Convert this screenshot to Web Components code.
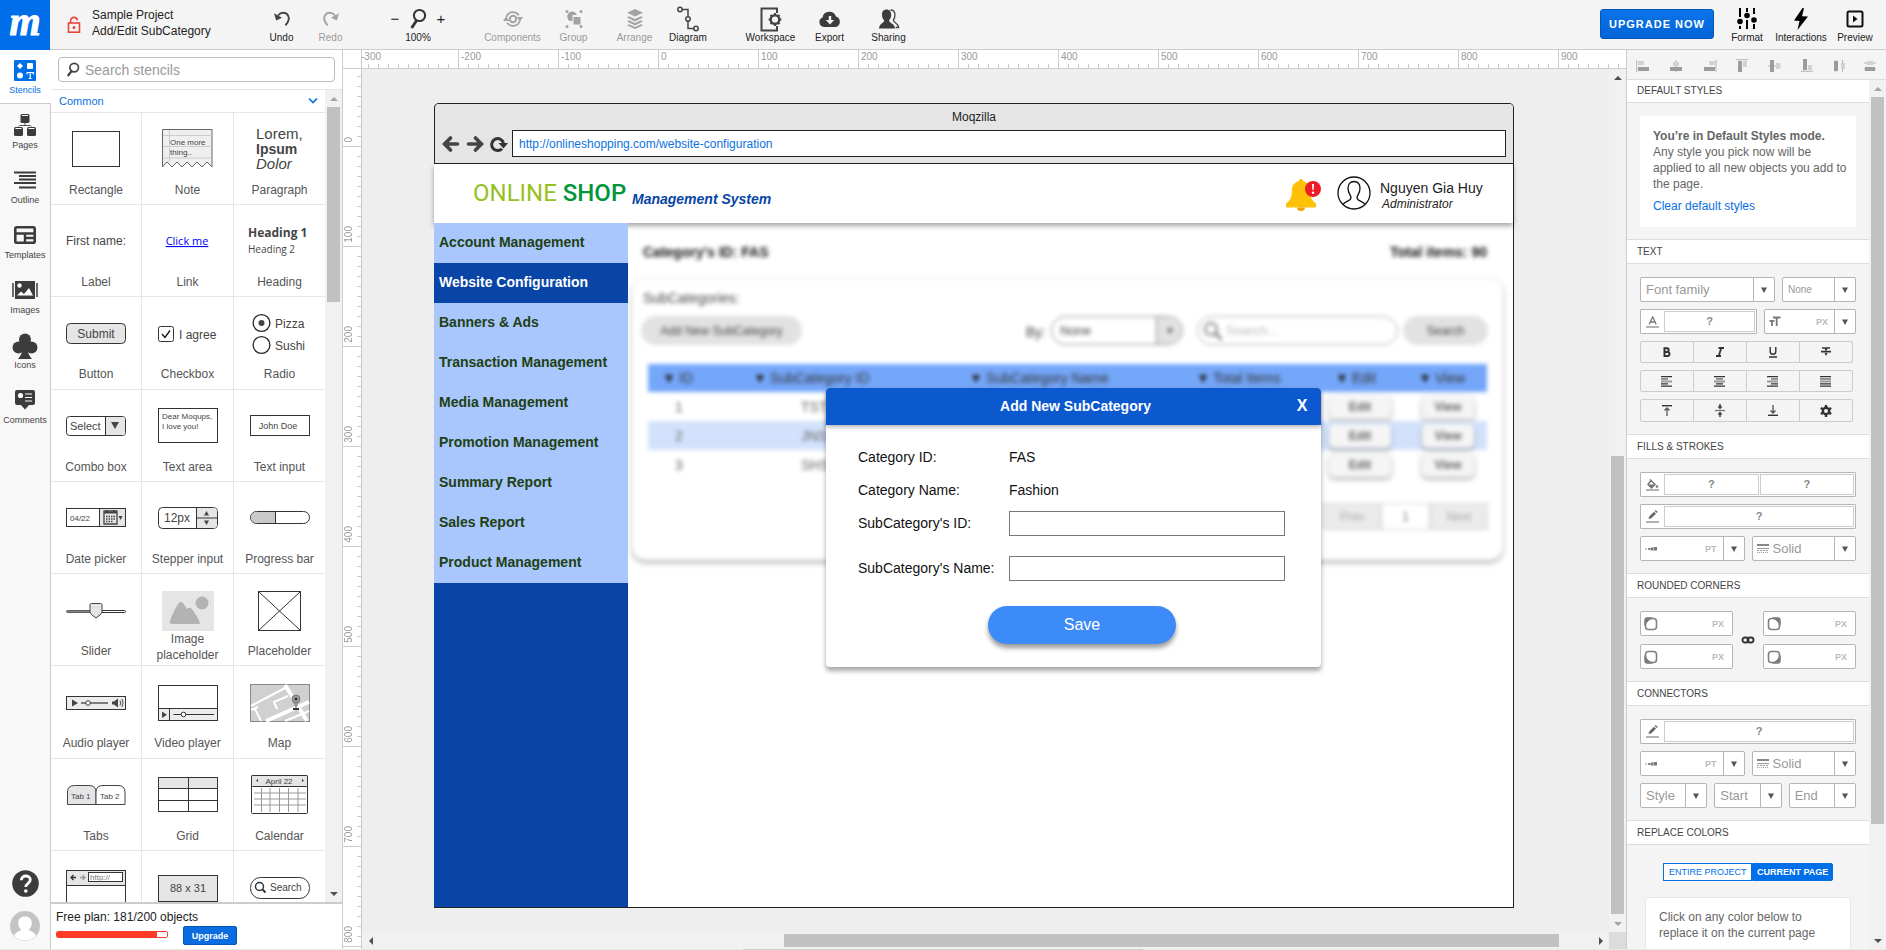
<!DOCTYPE html>
<html lang="en">
<head>
<meta charset="utf-8">
<title>Sample Project - Add/Edit SubCategory</title>
<style>
html,body{margin:0;height:100%}
body{font:12px/16px "Liberation Sans",Arial,sans-serif;color:#444;background:#eee;overflow:hidden}
</style>
</head>
<body>
<mockup-editor></mockup-editor>
<script>
const BASE = `*{box-sizing:border-box}
button,input,select{font:inherit;color:inherit;margin:0;padding:0;border:0;background:none;border-radius:0;outline:0;min-width:0}
button{cursor:pointer}svg{display:block;flex:none}a{text-decoration:none}`;

function define(name, css, html) {
  customElements.define(name, class extends HTMLElement {
    connectedCallback() {
      if (this.shadowRoot) return;
      const t = document.createElement('template');
      t.innerHTML = `<style>${BASE}${css}</style>` + (typeof html === 'function' ? html(this) : html);
      this.attachShadow({mode: 'open'}).append(t.content.cloneNode(true));
    }
  });
}

/* name: [width, height, markup] */
const ICONS = {
  lock: [14,18,'<g fill="none" stroke="#e8453c" stroke-width="1.6"><rect x="1.5" y="7" width="11" height="9.200"/><path d="M3.600 7V5.200C3.600 2.800 5 1.400 7 1.400c2 0 3.200 1.200 3.400 3"/></g><circle cx="7" cy="11.600" r="1.500" fill="#e8453c"/>'],
  undo: [20,18,'<path d="M6 5.500C9 1.800 14 2 16 5.400c1.600 3 .6 6.600-2.600 10" fill="none" stroke="currentColor" stroke-width="1.900"/><path d="M2 3.200l2.200 7.400 5.800-2.800z" fill="currentColor"/>'],
  redo: [20,18,'<path d="M14 5.500C11 1.800 6 2 4 5.400c-1.600 3-.6 6.600 2.600 10" fill="none" stroke="currentColor" stroke-width="1.900"/><path d="M18 3.200l-2.200 7.400-5.800-2.800z" fill="currentColor"/>'],
  mag: [18,22,'<circle cx="10.500" cy="7.500" r="5.600" fill="none" stroke="currentColor" stroke-width="2"/><path d="M7.600 12.400L2.600 20" stroke="currentColor" stroke-width="2.800"/>'],
  smallmag: [14,16,'<circle cx="8.200" cy="5.600" r="4.300" fill="none" stroke="currentColor" stroke-width="1.700"/><path d="M5.600 9L1.800 14" stroke="currentColor" stroke-width="2.200"/>'],
  components: [22,20,'<g fill="none" stroke="currentColor" stroke-width="1.800"><path d="M4.300 8a7 7 0 0 1 12.500-1.800M17.700 12a7 7 0 0 1-12.500 1.800"/><circle cx="11" cy="10" r="3.200" stroke-width="2"/></g><path d="M14.500 8h6.500l-3 4.500zM7.500 12H1l3-4.500z" fill="currentColor"/>'],
  group: [20,20,'<g fill="currentColor"><circle cx="3" cy="2.500" r="1.500"/><circle cx="17" cy="2.500" r="1.500"/><circle cx="3" cy="17.500" r="1.500"/><circle cx="17" cy="17.500" r="1.500"/><path d="M6 12a5 5 0 1 1 7-6H8.500v6z"/><rect x="9.500" y="8" width="7" height="7.500"/></g>'],
  arrange: [18,20,'<g fill="currentColor"><path d="M9 0l8 3.800-8 3.800-8-3.800z"/><path d="M3 7.200L9 10l6-2.800 2 1.300L9 12.400 1 8.500z"/><path d="M3 11.200L9 14l6-2.800 2 1.300-8 3.900-8-3.900z"/><path d="M3 15.200L9 18l6-2.800 2 1.300L9 20l-8-3.500z"/></g>'],
  diagram: [24,26,'<g fill="none" stroke="#444" stroke-width="1.500"><circle cx="4" cy="3.500" r="2.200"/><circle cx="12" cy="13" r="2.200"/><circle cx="20" cy="22.500" r="2.200"/><path d="M6.200 3.500H12v7.300M12 15.200v7.300h5.800"/></g>'],
  workspace: [22,25,'<path d="M17 6V1.500H1.500v22H17V19" fill="none" stroke="#444" stroke-width="2"/><circle cx="15" cy="12.500" r="4.300" fill="none" stroke="#444" stroke-width="2.400"/><path d="M15 6v2.500M15 16.500V19M8.600 12.500H11M19 12.500h2.400M10.500 8l1.700 1.700M17.800 15.300l1.700 1.700M10.500 17l1.700-1.700M17.800 9.700L19.500 8" stroke="#444" stroke-width="2"/>'],
  export: [24,18,'<path d="M6 17a5 5 0 0 1-1.500-9.600A7 7 0 0 1 18 6.500 5.500 5.500 0 0 1 18 17z" fill="#3c3c3c"/><path d="M10.800 6h2.400v4h3L12 14.500 7.800 10h3z" fill="#f4f4f4"/>'],
  sharing: [22,20,'<path d="M12.500 1c3 0 4.500 2 4.500 5 0 2.500-.7 3.800-1.600 5 0 3 4.600 2.600 5.200 7.500h-3" fill="none" stroke="#444" stroke-width="1.300"/><path d="M8.500.5c3.200 0 4.700 2.200 4.700 5.200 0 2.600-.9 4.300-2.200 5.500 0 3 5.500 2.600 6 8.300H1c.5-5.700 5.200-5.300 5.200-8.300C4.800 10 4 8.300 4 5.700 4 2.700 5.400.5 8.500.5z" fill="#3c3c3c"/>'],
  format: [20,22,'<g stroke="#000" stroke-width="2"><path d="M3 0v9M3 18v3M10 0v4M10 12v9M17 0v6M17 16v5"/></g><g fill="#000"><circle cx="3" cy="13.500" r="2.800"/><circle cx="10" cy="7.500" r="2.800"/><circle cx="17" cy="12" r="2.800"/></g>'],
  bolt: [16,22,'<path d="M9.500 0L1 12.500l5.500.5L4.500 22 15 8.500 9 8.200 11 .2z" fill="#000"/>'],
  preview: [18,18,'<rect x="1.500" y="1.500" width="15" height="15" rx="1.500" fill="none" stroke="#111" stroke-width="2"/><path d="M7 5.500v7l4.500-3.500z" fill="#111"/>'],
  stencils: [22,21,'<rect width="22" height="21" rx="1" fill="#006fe8"/><g fill="#fff"><path d="M6 3l3 3-3 3-3-3z"/><rect x="13" y="3" width="6" height="6" rx="1"/><circle cx="6" cy="15.500" r="3"/><path d="M13 12.500h6.400v2M13 14.500v-2M16.200 12.500v6M14.800 18.500h2.800" fill="none" stroke="#fff" stroke-width="1.200"/></g>'],
  pages: [24,24,'<g fill="#3c3c3c"><rect x="7.500" y="1" width="9" height="9" rx="1.500"/><rect x="1" y="14" width="9" height="9" rx="1.500"/><rect x="14" y="14" width="9" height="9" rx="1.500"/></g><path d="M9 2.500h6M2.500 15.500h6M15.500 15.500h6" stroke="#fff"/><path d="M12 10v2.500M5.500 13.500l1-1h11l1 1" fill="none" stroke="#555"/>'],
  outline: [22,18,'<path d="M0 1.500h22M5 5h17M5 8.500h17M0 12h22M5 16.500h17" stroke="#3c3c3c" stroke-width="2"/>'],
  templates: [22,18,'<rect x="1.300" y="1.300" width="19.400" height="15.400" rx="1.500" fill="none" stroke="#3c3c3c" stroke-width="2.600"/><path d="M1 7.500h20M11 7.500V17M11 12h10" stroke="#3c3c3c" stroke-width="2.400"/>'],
  images: [26,18,'<path d="M1 2v14M25 2v14" stroke="#3c3c3c" stroke-width="1.500"/><rect x="3" y="0" width="20" height="18" fill="#3c3c3c"/><path d="M5 14.500l4-4 3 2.500 5-6 4 7.500z" fill="#fff"/><circle cx="7.500" cy="4.500" r="2.200" fill="#fff"/>'],
  club: [26,26,'<g fill="#3c3c3c"><circle cx="13" cy="6.500" r="6"/><circle cx="6.500" cy="14.500" r="6"/><circle cx="19.500" cy="14.500" r="6"/><path d="M11 10h4c0 8 1 11 5 16H6c4-5 5-8 5-16z"/></g>'],
  comments: [22,20,'<path d="M3 0h16a2 2 0 0 1 2 2v11a2 2 0 0 1-2 2h-4l-4 4.500L7 15H3a2 2 0 0 1-2-2V2a2 2 0 0 1 2-2z" fill="#3c3c3c"/><circle cx="6.500" cy="5.500" r="2.600" fill="#fff"/><path d="M11 4h7M11 7.500h7M11 11h7" stroke="#fff" stroke-width="1.200"/>'],
  help: [27,27,'<circle cx="13.500" cy="13.500" r="13.300" fill="#3c3c3c"/><path d="M9.300 10.300c0-5.800 9-5.500 9-.6 0 3.600-4.500 3.600-4.500 7.300" fill="none" stroke="#fff" stroke-width="2.800"/><circle cx="13.800" cy="21" r="1.800" fill="#fff"/>'],
  user: [30,30,'<circle cx="15" cy="15" r="15" fill="#c4c4c4"/><path d="M15 5.500c4.300 0 6.800 2.600 6.800 6.800 0 2.500-1.200 4.500-2.800 6 0 2 6 2.500 7 6.500A15 15 0 0 1 4 24.800c1-4 7-4.500 7-6.500-1.600-1.500-2.800-3.500-2.800-6 0-4.200 2.500-6.800 6.800-6.800z" fill="#fff"/>'],
  chevron: [10,8,'<path d="M1 1.500l4 4 4-4" fill="none" stroke="#0a70e0" stroke-width="1.700"/>'],
  caret: [8,8,'<path d="M1 1.500h6L4 7z" fill="#555"/>'],
  alL: [14,12,'<path d="M.7 0v12" stroke="#b5b5b5"/><rect x="2" y="1" width="6" height="4" fill="#d2d2d2"/><rect x="2" y="7" width="11" height="4" fill="#9c9c9c"/>'],
  alC: [14,12,'<path d="M7 0v12" stroke="#b5b5b5"/><rect x="4" y="2" width="6" height="4" fill="#d2d2d2"/><rect x="1" y="7" width="12" height="4" fill="#9c9c9c"/>'],
  alR: [14,12,'<path d="M13 0v12" stroke="#b5b5b5"/><rect x="6" y="1" width="6" height="4" fill="#d2d2d2"/><rect x="1" y="7" width="11" height="4" fill="#9c9c9c"/>'],
  alT: [12,13,'<path d="M0 .7h12" stroke="#b5b5b5"/><rect x="2" y="2" width="4" height="11" fill="#9c9c9c"/><rect x="7" y="2" width="4" height="6" fill="#d2d2d2"/>'],
  alM: [14,12,'<path d="M0 6h13" stroke="#b5b5b5"/><rect x="2" y="0" width="4" height="12" fill="#9c9c9c"/><rect x="8" y="3" width="4" height="6" fill="#d2d2d2"/>'],
  alB: [12,13,'<path d="M0 12.300h12" stroke="#b5b5b5"/><rect x="2" y="0" width="4" height="11" fill="#9c9c9c"/><rect x="7" y="6" width="4" height="5" fill="#d2d2d2"/>'],
  diH: [12,12,'<path d="M2.500 0v12M9.500 0v12" stroke="#b5b5b5"/><rect x="1" y="1" width="4" height="10" fill="#9c9c9c"/><rect x="8" y="3" width="4" height="6" fill="#d2d2d2"/>'],
  diV: [12,12,'<path d="M0 3h12M0 9h12" stroke="#b5b5b5"/><rect x="3" y="1" width="6" height="4" fill="#d2d2d2"/><rect x="1" y="7" width="10" height="4" fill="#9c9c9c"/>'],
  A: [14,12,'<path d="M3.200 8.500L6.700.8 10.200 8.500M4.500 6h4.500" fill="none" stroke="#777" stroke-width="1.300"/><path d="M0 11h13" stroke="#b9b0b0" stroke-width="2"/>'],
  tT: [12,11,'<path d="M4 1.500h7.500M7.700 1.500V10M.5 4.800h5M3 4.800V10" stroke="#777" stroke-width="1.800" fill="none"/>'],
  bucket: [14,12,'<path d="M5 1.500l4 4-3.500 3.500L2 5.500zM4 .5l2 2" fill="none" stroke="#777" stroke-width="1.500"/><path d="M2 5.500h7L5.500 9z" fill="#777"/><circle cx="11" cy="7.500" r="1.300" fill="#777"/><path d="M0 11h13" stroke="#b9b0b0" stroke-width="2"/>'],
  pencil: [14,13,'<path d="M2.500 9l.7-2.500L8 1.700l2 2L5 8.500zM8.700 1l1-1 2 2-1 1z" fill="#666"/><path d="M0 12h13" stroke="#b9b0b0" stroke-width="2"/>'],
  dots: [12,4,'<rect x="0" y="1.500" width="2" height="1" fill="#999"/><rect x="3" y="1" width="2" height="2" fill="#888"/><rect x="5.500" y=".5" width="2.500" height="3" fill="#777"/><rect x="8.500" y="0" width="3.500" height="3.500" fill="#777"/>'],
  lines: [12,9,'<path d="M0 1h12" stroke="#888" stroke-width="2"/><path d="M0 4.500h12" stroke="#999"/><path d="M0 6.500h12" stroke="#999" stroke-dasharray="2 1"/><path d="M0 8.500h12" stroke="#999" stroke-dasharray="1 1"/>'],
  B: [10,10,'<path d="M2.500 1.200h3a2 2 0 0 1 0 3.700h-3zM2.500 5h3.500a2 2 0 0 1 0 3.900H2.500z" fill="none" stroke="#333" stroke-width="2"/>'],
  I: [10,10,'<path d="M3.500 1H9M1 9h5M6.300 1L3.700 9" stroke="#333" stroke-width="1.800"/>'],
  U: [10,11,'<path d="M2.200 0v4.500a2.800 2.800 0 0 0 5.600 0V0M1 10h8" fill="none" stroke="#333" stroke-width="1.400"/>'],
  S: [12,10,'<path d="M2 1h8M1 4.600h10" stroke="#333" stroke-width="1.600"/><path d="M5 1h2v2.500H5zM4.500 6h3L6 9z" fill="#333"/>'],
  tl: [12,11,'<path d="M0 .7h11M0 3h7M0 7.800h7M0 10.200h11" stroke="#333" stroke-width="1.200"/><path d="M0 5.500h11" stroke="#999" stroke-width="2"/>'],
  tc: [12,11,'<path d="M0 .7h11M2 3h7M2 7.800h7M0 10.200h11" stroke="#333" stroke-width="1.200"/><path d="M0 5.500h11" stroke="#999" stroke-width="2"/>'],
  tr: [12,11,'<path d="M0 .7h11M4 3h7M4 7.800h7M0 10.200h11" stroke="#333" stroke-width="1.200"/><path d="M0 5.500h11" stroke="#999" stroke-width="2"/>'],
  tj: [12,11,'<path d="M0 .7h11M0 3h11M0 7.800h11M0 10.200h11" stroke="#333" stroke-width="1.200"/><path d="M0 5.500h11" stroke="#999" stroke-width="2"/>'],
  vt: [10,11,'<path d="M0 .7h10" stroke="#333" stroke-width="1.400"/><path d="M5 3v8M2.500 5.500L5 3l2.500 2.500" fill="none" stroke="#555" stroke-width="1.300"/>'],
  vm: [10,13,'<path d="M0 6.500h10" stroke="#777" stroke-width="1.400"/><path d="M5 0v3M5 13v-3" stroke="#333" stroke-width="1.500"/><path d="M2.500 2.500h5L5 5.200zM2.500 10.500h5L5 7.800z" fill="#333"/>'],
  vb: [10,11,'<path d="M0 10.300h10" stroke="#333" stroke-width="1.400"/><path d="M5 0v8M2.500 5.500L5 8l2.500-2.500" fill="none" stroke="#555" stroke-width="1.300"/>'],
  gear: [12,12,'<circle cx="6" cy="6" r="3.200" fill="none" stroke="#333" stroke-width="2.400"/><path d="M6 0v3M6 9v3M.8 3l2.600 1.500M8.600 7.500L11.200 9M.8 9l2.600-1.500M8.600 4.500L11.200 3" stroke="#333" stroke-width="2.400"/>'],
  c1: [14,14,'<path d="M.3 9V3.300a3 3 0 0 1 3-3H9L5 3 3 5z" fill="#777"/><rect x="1.500" y="1.500" width="11" height="11" rx="3" fill="none" stroke="#808080" stroke-width="1.600"/><path d="M2 8V4a2 2 0 0 1 2-2h4C5 2.500 2.500 5 2 8z" fill="#777"/>'],
  link: [14,8,'<g fill="none" stroke="#333" stroke-width="1.900"><rect x="1.500" y="1.500" width="6" height="5" rx="2.500"/><rect x="6.500" y="1.500" width="6" height="5" rx="2.500"/></g>'],
  back: [18,18,'<path d="M15.500 9H4M8.500 3L2.500 9l6 6" fill="none" stroke="#444" stroke-width="3.600" stroke-linecap="round"/>'],
  fwd: [18,18,'<path d="M2.500 9H14M9.500 3l6 6-6 6" fill="none" stroke="#444" stroke-width="3.600" stroke-linecap="round"/>'],
  reload: [18,18,'<path d="M12 13.800A6 6 0 1 1 13.500 8" fill="none" stroke="#333" stroke-width="3"/><path d="M8.500 8h9.500L13.500 13.500z" fill="#333"/>'],
  bell: [32,32,'<path d="M15 0c1.500 0 2.200 1 2.200 2.200 5.300 1.300 7 5 7 9.800 0 7 2 9.500 5.800 12.500v4H0v-4C3.800 21.500 5.800 19 5.800 12c0-4.800 1.700-8.500 7-9.800C12.800 1 13.500 0 15 0z" fill="#ffc107"/><path d="M11 28.500h8a4 3.500 0 0 1-8 0z" fill="#f0a400"/>'],
  alert: [16,16,'<circle cx="8" cy="8" r="8" fill="#ee1c25"/><path d="M7 3h2l-.4 6H7.400z" fill="#fff"/><circle cx="8" cy="11.800" r="1.200" fill="#fff"/>'],
  admin: [34,34,'<g fill="none" stroke="#111" stroke-width="1.300"><circle cx="17" cy="17" r="16"/><path d="M6 28.500c1.500-3.500 8-3 8-7 0-2.500-3-4-3-9C11 8 13 5.500 17 5.500s6 2.500 6 7c0 5-3 6.500-3 9 0 4 6.500 3.500 8 7"/></g>'],
  pmag: [20,20,'<circle cx="8" cy="8" r="6" fill="none" stroke="#555" stroke-width="1.500"/><path d="M12.500 12.500l6 6" stroke="#555" stroke-width="2"/>']
};
const icon = (n, tf = '') => { const [w,h,m] = ICONS[n];
  return `<svg width="${w}" height="${h}" viewBox="0 0 ${w} ${h}" aria-hidden="true"${tf ? ` style="transform:${tf}"` : ''}>${m}</svg>`; };

/* ---------- scroll bar ---------- */
define('scroll-bar', `:host{display:flex;flex-direction:column;width:17px;background:#f1f1f1;flex:none}
:host([horizontal]){flex-direction:row;width:auto;height:17px}
.end{flex:none;width:17px;height:17px;display:grid;place-items:center}
.a{flex-grow:var(--before,0)}.t{flex-grow:var(--thumb,1);background:#c1c1c1;margin:0 2px}.b{flex-grow:var(--after,0)}
:host([horizontal]) .t{margin:2px 0}`,
 el => { const h = el.hasAttribute('horizontal'), c = i => (el.getAttribute('ends') || 'dd')[i] === 'd' ? '#505050' : '#a3a3a3';
  const tri = (p, f) => `<div class="end"><svg width="8" height="8" viewBox="0 0 8 8"><path d="${p}" fill="${f}"/></svg></div>`;
  return tri(h ? 'M6 0v8L2 4z' : 'M0 6h8L4 2z', c(0)) + '<div class="a"></div><div class="t"></div><div class="b"></div>' + tri(h ? 'M2 0v8l4-4z' : 'M0 2h8L4 6z', c(1)); });

/* ---------- top bar ---------- */
define('tool-button', `:host{display:block;width:var(--w,61px);color:#222}
:host([muted]){color:#9a9a9a}
button{width:100%;display:flex;flex-direction:column;align-items:center;font-size:10px;line-height:12px;padding-top:6px}
.i{height:26px;display:grid;place-items:center;color:#444}:host([muted]) .i{color:#a3a3a3}`,
 el => `<button${el.hasAttribute('muted') ? ' disabled' : ''} style="color:inherit"><span class="i">${icon(el.getAttribute('icon'))}</span><slot></slot></button>`);

define('top-bar', `:host{display:flex;height:50px;background:#f4f4f4;border-bottom:1px solid #ccc;color:#222}
.logo{width:50px;height:50px;background:#006de9;color:#fff;flex:none;text-align:center;font:italic bold 40px/44px "Liberation Serif",serif;-webkit-text-stroke:1px #fff}
.lock{width:42px;display:grid;place-items:center;flex:none;padding-right:10px;padding-left:16px}
.title{width:165px;padding-top:7px;flex:none;white-space:nowrap}
.title div{height:16px}
.grp{display:flex;flex:none}
.zoom{width:60px;margin:0 34px 0 33px;display:grid;grid-template-columns:14px 1fr 14px;justify-items:center;align-items:center;grid-template-rows:26px 12px;padding-top:6px;align-content:start;font-size:10px;line-height:12px}
.zoom button{font-size:15px}.zoom .i{color:#333}.zoom span{grid-column:1/4}
.up{margin-left:auto;align-self:start;margin-top:9px;height:30px;width:114px;border:1px solid #0057b8;border-radius:3px;background:linear-gradient(#0a74e8,#0264d8);color:#fff;font-weight:bold;font-size:11px;letter-spacing:1px;flex:none}`,
`<div class="logo">m</div><div class="lock">${icon('lock')}</div>
<div class="title"><div>Sample Project</div><div>Add/Edit SubCategory</div></div>
<div class="grp" style="--w:49px"><tool-button icon="undo">Undo</tool-button><tool-button icon="redo" muted>Redo</tool-button></div>
<div class="zoom"><button aria-label="Zoom out">−</button><div class="i">${icon('mag')}</div><button aria-label="Zoom in">+</button><span>100%</span></div>
<div class="grp"><tool-button icon="components" muted>Components</tool-button><tool-button icon="group" muted>Group</tool-button><tool-button icon="arrange" muted>Arrange</tool-button><tool-button icon="diagram" style="--w:46px">Diagram</tool-button></div>
<div class="grp" style="--w:59px;margin-left:30px"><tool-button icon="workspace">Workspace</tool-button><tool-button icon="export">Export</tool-button><tool-button icon="sharing">Sharing</tool-button></div>
<button class="up">UPGRADE NOW</button>
<div class="grp" style="--w:54px;margin:0 4px 0 6px"><tool-button icon="format">Format</tool-button><tool-button icon="bolt">Interactions</tool-button><tool-button icon="preview">Preview</tool-button></div>`);

/* ---------- left rail ---------- */
define('rail-item', `:host{display:block;height:55px}
button{width:100%;height:100%;display:flex;flex-direction:column;align-items:center;padding-top:9px;font-size:9px;line-height:12px;gap:2px}
.i{height:24px;display:grid;place-items:center}
:host([active]){background:#fff;height:54px;border-bottom:1px solid #ccc;margin-right:-1px;color:#006fe8}
:host([active]) button{padding-top:8px;padding-right:1px}`,
 el => `<button><span class="i">${icon(el.getAttribute('icon'))}</span><slot></slot></button>`);
define('side-rail', `:host{display:flex;flex-direction:column;width:51px;background:#f8f8f8;border-right:1px solid #ccc;flex:none}
.foot{margin-top:auto;display:flex;flex-direction:column;align-items:center;gap:14px;padding-bottom:8px}`,
`<rail-item icon="stencils" active>Stencils</rail-item><rail-item icon="pages">Pages</rail-item><rail-item icon="outline">Outline</rail-item><rail-item icon="templates">Templates</rail-item><rail-item icon="images">Images</rail-item><rail-item icon="club">Icons</rail-item><rail-item icon="comments">Comments</rail-item>
<div class="foot"><button aria-label="Help">${icon('help')}</button><button aria-label="Account">${icon('user')}</button></div>`);

/* ---------- stencil panel ---------- */
const box = (x,y,w,h,f='#fff',r=0) => `<rect x="${x}" y="${y}" width="${w}" height="${h}" rx="${r}" fill="${f}" stroke="#333"/>`;
const txt = (x,y,s,t,extra='') => `<text x="${x}" y="${y}" font-size="${s}" ${extra}>${t}</text>`;
const mid = 'text-anchor="middle"';
const STENCILS = [
 ['Rectangle', box(-23.5,18.5,47,35)],
 ['Note', `<path d="M-25.500 54V16.500H24V54l-5-5-5 5-5-5-5 5-5-5-5 5-5-5-5 5-5-5z" fill="#efefef" stroke="#666"/><path d="M-25 22.500H24M-25 33.500H24M-25 45H24M-18.500 17V49" stroke="#ccc"/>` + txt(-18,32,8,'One more') + txt(-18,42,8,'thing..')],
 ['Paragraph', txt(-24,26,15,'Lorem,') + txt(-24,41,14,'Ipsum','font-weight="bold"') + txt(-24,56,15,'Dolor','font-style="italic"')],
 ['Label', txt(0,40,12,'First name:',mid)],
 ['Link', txt(-1,40,11,'Click me','text-anchor="middle" font-family="Open Sans" style="fill:#00f;text-decoration:underline"')],
 ['Heading', txt(-32,32,12,'Heading 1','font-weight="bold" font-family="Open Sans"') + txt(-32,48,10,'Heading 2','font-family="Open Sans"')],
 ['Button', box(-29.5,26.5,59,20,'#e5e5e5',4) + txt(0,41,12,'Submit',mid)],
 ['Checkbox', box(-29.5,29.5,15,15,'#fff',2) + '<path d="M-26 37l3 3.500 5-7" fill="none" stroke="#111" stroke-width="1.300"/>' + txt(-9,42,12,'I agree')],
 ['Radio', '<g fill="none" stroke="#222" stroke-width="1.300"><circle cx="-18.500" cy="26" r="8.400"/><circle cx="-18.500" cy="48" r="8.400"/></g><circle cx="-18.500" cy="26" r="3" fill="#444"/>' + txt(-5,31,12,'Pizza') + txt(-5,53,12,'Sushi')],
 ['Combo box', box(-29.5,26.5,59,19,'#fff',3) + '<path d="M9.500 27H27a2 2 0 0 1 2 2v14a2 2 0 0 1-2 2H9.500z" fill="#e5e5e5"/><path d="M9.500 27v18" stroke="#333"/><path d="M15 32h8l-4 7z" fill="#444"/>' + txt(-26,40,11,'Select')],
 ['Text area', box(-29.5,18.5,59,34) + txt(-26,29,8,'Dear Moqups,') + txt(-26,39,8,'I love you!')],
 ['Text input', box(-29.5,25.5,59,20) + txt(-2,39,9,'John Doe',mid)],
 ['Date picker', box(-29.5,26.5,59,18) + '<rect x="4" y="27" width="25" height="17" fill="#e5e5e5"/><path d="M3.500 27v17" stroke="#333"/><path d="M8 29h13v13H8z" fill="none" stroke="#444" stroke-width="1.300"/><path d="M8 30.500h13M11 28v3M18 28v3" stroke="#444" stroke-width="2"/><path d="M10 34.500h9M10 37h9M10 39.500h7" stroke="#444" stroke-width="1.500" stroke-dasharray="1.500 1"/><path d="M22.500 34h4L24.500 38z" fill="#444"/>' + txt(-26,39,8,'04/22')],
 ['Stepper input', box(-29.5,25.5,59,21,'#fff',4) + '<path d="M8.500 26H26a3 3 0 0 1 3 3v14a3 3 0 0 1-3 3H8.500z" fill="#e5e5e5"/><path d="M8.500 26v20M8.500 36H29" stroke="#333"/><path d="M16 33.500h5l-2.500-4.500zM16 38.500h5L18.500 43z" fill="#444"/>' + txt(-24,40,12,'12px')],
 ['Progress bar', box(-29.5,29.5,59,12,'#fff',6) + '<path d="M-4.500 30H-23.500a5.500 5.500 0 0 0 0 11H-4.500z" fill="#c9c9c9"/><path d="M-4.500 30v11" stroke="#333"/>'],
 ['Slider', '<rect x="-29.500" y="36.500" width="59" height="2" rx="1" fill="#fff" stroke="#333"/><rect x="-29" y="36.500" width="25" height="2" fill="#888"/><path d="M-6 31q0-1.500 1.500-1.500h9Q6 29.500 6 31v7q0 1-2 3l-4 3-4-3q-2-2-2-3z" fill="#e5e5e5" stroke="#444"/>'],
 ['Image placeholder', '<rect x="-26" y="17" width="52" height="40" fill="#e5e5e5"/><circle cx="14" cy="29" r="6.500" fill="#b3b3b3"/><path d="M-18 47c2-6 7-17 10-19 2-1 4 2 7 7 3-3 5 0 7 3 3 4 6 10 6 11s-2 1-3 1h-24c-3 0-4-1-3-3z" fill="#b3b3b3"/>'],
 ['Placeholder', box(-21.5,17.5,42,39) + '<path d="M-21.500 17.500l42 39M20.500 17.500l-42 39" stroke="#333"/>'],
 ['Audio player', box(-29.5,30.5,59,13,'#ececec') + '<path d="M-24 33.500v7l6-3.500z" fill="#444"/><path d="M-15 37H12" stroke="#333" stroke-width="1.200"/><circle cx="-8" cy="37" r="2.300" fill="#fff" stroke="#333"/><path d="M16 35.500h2l4-3v9l-4-3h-2z" fill="#444"/><path d="M24 34.500q1.500 2.500 0 5M26 33q2 4 0 8" fill="none" stroke="#555"/>'],
 ['Video player', box(-29.5,19.5,59,35) + box(-29.5,42.5,59,12,'#ececec') + '<path d="M-18.500 43v12M-14.500 48.500H26" stroke="#333"/><path d="M-26 45.500v6.500l5-3.200z" fill="#444"/><circle cx="-4.500" cy="48.500" r="2.300" fill="#fff" stroke="#333"/>'],
 ['Map', '<rect x="-29.500" y="18.500" width="59" height="37" fill="#d0d0d0" stroke="#888"/><g fill="none" stroke="#fff"><path d="M5 19l13 21 9 15" stroke-width="4"/><path d="M-14 55L29 36" stroke-width="4"/><path d="M-29 40L5 22M-25 43l6 12M-29 44l7-3M-3 43l-3-7 14-6M5 55l24-10" stroke-width="2"/></g><path d="M16 43l-3.500-8h7z" fill="#999"/><circle cx="16" cy="33" r="4" fill="#999" stroke="#777"/><path d="M13 43h6" stroke="#333" stroke-width="2"/><circle cx="16" cy="33" r="1.300" fill="#222"/>'],
 ['Tabs', '<path d="M-28.500 45.500V33q0-6.500 7-6.500H-7Q0 26.500 0 33v12.500z" fill="#e5e5e5" stroke="#444"/><path d="M0 45.500V33q0-6.500 7-6.500H22q7 0 7 6.500v12.500z" fill="#fff" stroke="#444"/>' + txt(-25,40,8,'Tab 1') + txt(4,40,8,'Tab 2')],
 ['Grid', box(-29.5,18.5,59,34) + box(-29.5,18.5,59,11,'#e5e5e5') + '<path d="M-29 41.500H29M.5 19v34" stroke="#333"/>'],
 ['Calendar', box(-28.5,16.5,56,38,'#fff',1) + box(-28.5,16.5,56,11,'#e5e5e5',1) + '<path d="M-26 34H26M-26 40H26M-26 46H26M-18.500 29V53M-10 29V53M-.500 29V53M8.500 29V53M18 29V53" stroke="#999"/><path d="M-22 20v3l-2-1.500zM22 20v3l2-1.500z" fill="#333"/>' + txt(-1,25,8,'April 22',mid)],
 ['', box(-29.5,19.5,59,60) + '<path d="M-29 20H29V34H-29z" fill="#e5e5e5"/><path d="M-29 34.500H29" stroke="#333"/>' + box(-7.5,21.5,34,9) + '<path d="M-20 26.500h-5m2.500-2.500l-2.500 2.500 2.500 2.500" fill="none" stroke="#333" stroke-width="1.300"/><path d="M-16 26.500h5m-2.500-2.500l2.500 2.500-2.500 2.500" fill="none" stroke="#999" stroke-width="1.300"/>' + txt(-6,29,8,'http://','style="fill:#777"')],
 ['', box(-29.5,24.5,59,26,'#e5e5e5') + txt(0,41,11,'88 x 31',mid)],
 ['', box(-29.5,26.5,59,21,'#fff',10) + '<circle cx="-20.500" cy="35.500" r="4" fill="none" stroke="#333" stroke-width="1.500"/><path d="M-17.500 38.500l3 3" stroke="#333" stroke-width="2"/>' + txt(-10,40,10,'Search')]
];
define('stencil-card', `:host{display:flex;flex-direction:column;align-items:center;border-right:1px solid #e6e6e6;border-bottom:1px solid #e6e6e6;overflow:hidden;text-align:center;color:#555}
:host(.last){border-right:0}
.l{margin-top:-3px;width:80px;white-space:nowrap}:host(.two) .l{margin-top:-15px;white-space:normal}text{fill:#444}`,
 el => `<svg width="90" height="72" viewBox="-45 0 90 72" aria-hidden="true" overflow="visible">${STENCILS[el.dataset.i][1]}</svg><div class="l"><slot></slot></div>`);
define('stencil-panel', `:host{display:flex;flex-direction:column;width:292px;background:#fff;border-right:1px solid #ccc;flex:none}
.s{height:40px;flex:none;padding:7px;border-bottom:1px solid #e6e6e6}
.s label{display:flex;align-items:center;gap:5px;height:25px;border:1px solid #bbb;border-radius:4px;padding-left:7px;color:#444}
input{flex:1;font-size:14px}input::placeholder{color:#999;opacity:1}
.m{flex:1;display:flex;min-height:0}.c{flex:1;display:flex;flex-direction:column;overflow:hidden}
.h{height:23px;flex:none;width:100%;border-bottom:1px solid #e6e6e6;display:flex;align-items:center;justify-content:space-between;padding:0 7px 1px 8px;color:#0a70e0;font-size:11px}
.g{display:grid;grid-template-columns:91px 92px 1fr;grid-template-rows:92px 92px 93px 92px 92px 92px 93px 92px 92px;flex:none}
.f{flex:none;height:47px;border-top:2px solid #ccc;padding:5px 5px 0;color:#222}
.r{display:flex;align-items:center;gap:15px;margin-top:1px}
progress{appearance:none;-webkit-appearance:none;width:112px;height:7px;border:1px solid #ff3b28;border-radius:2px;overflow:hidden;background:#fff;margin-bottom:2px}
progress::-webkit-progress-bar{background:#fff}progress::-webkit-progress-value{background:#ff3b28}
.u{width:54px;height:19px;border:1px solid #0057b8;border-radius:2px;background:#0a6ce0;color:#fff;font-weight:bold;font-size:9px}`,
`<div class="s"><label>${icon('smallmag')}<input placeholder="Search stencils" aria-label="Search stencils"></label></div>
<div class="m"><div class="c"><button class="h"><span>Common</span>${icon('chevron')}</button><div class="g">${STENCILS.map((s,i)=>`<stencil-card data-i="${i}" class="${i%3==2?'last':''} ${i==16?'two':''}">${s[0]}</stencil-card>`).join('')}</div></div>
<scroll-bar ends="ld" style="--thumb:195;--after:584"></scroll-bar></div>
<div class="f"><div>Free plan: 181/200 objects</div><div class="r"><progress max="200" value="181" aria-label="Objects used"></progress><button class="u">Upgrade</button></div></div>`);

/* ---------- rulers ---------- */
define('canvas-ruler', `:host{display:block;overflow:hidden;background:#fff;color:#999;font-size:10px;line-height:12px}
.r{display:flex}.c{flex:none}
:host([axis=x]){height:19px;border-bottom:1px solid #ccc}
:host([axis=x]) .r{margin-left:-4px}
:host([axis=x]) .c{width:100px;height:18px;padding:1px 0 0 3px;background:linear-gradient(#ccc,#ccc) 0 0/1px 18px no-repeat,repeating-linear-gradient(90deg,#ccc 0 1px,transparent 1px 10px) 0 14px/100px 4px no-repeat}
:host([axis=y]){width:19px;border-right:1px solid #ccc}
:host([axis=y]) .r{flex-direction:column;margin-top:-22px}
:host([axis=y]) .c{height:100px;width:18px;display:flex;flex-direction:column;justify-content:flex-end;align-items:flex-start;padding:0 0 4px;background:linear-gradient(#ccc,#ccc) 0 99px/18px 1px no-repeat,repeating-linear-gradient(0deg,#ccc 0 1px,transparent 1px 10px) 14px 0/4px 100px no-repeat}
:host([axis=y]) span{writing-mode:vertical-rl;transform:rotate(180deg)}`,
 el => { const a = +el.getAttribute('from'), b = +el.getAttribute('to'); let s = '';
  for (let v = a; v <= b; v += 100) s += `<div class="c"><span>${v}</span></div>`; return `<div class="r">${s}</div>`; });

/* ---------- mocked shop page ---------- */
define('shop-dialog', `:host{display:block;width:495px;background:#fff;border-radius:4px;box-shadow:0 4px 5px rgba(0,0,0,.35);color:#111;font-size:14px;line-height:18px}
header{height:37px;background:#0c59cf;border-radius:4px 4px 0 0;color:#fff;font-weight:bold;display:grid;grid-template-columns:42px 1fr 38px;align-items:center;text-align:center;padding-bottom:2px;box-shadow:0 2px 4px rgba(0,0,0,.3)}
header button{font-size:16px}
form{display:grid;grid-template-columns:151px 276px;grid-template-rows:33px 33px 34px 56px;align-items:center;padding:15px 36px 23px 32px;}
input{height:25px;border:1px solid #777;width:100%;background:#fff}
label{white-space:nowrap}
.save{grid-column:1/3;justify-self:start;margin:10px 0 0 130px;width:188px;height:38px;border-radius:19px;background:#3d8bf8;color:#fff;font-size:16px;box-shadow:0 4px 5px rgba(0,0,0,.4)}`,
`<header><span></span><span>Add New SubCategory</span><button aria-label="Close">X</button></header>
<form><label for="cid">Category ID:</label><output id="cid">FAS</output><label for="cname">Category Name:</label><output id="cname">Fashion</output>
<label for="sid">SubCategory's ID:</label><input id="sid"><label for="sname">SubCategory's Name:</label><input id="sname">
<button type="button" class="save">Save</button></form>`);

define('shop-listing', `:host{display:block;filter:blur(2px);color:#444;font-size:14px;line-height:20px;padding:19px 10px 0 4px}
.t{display:flex;justify-content:space-between;padding:0 16px 0 11px;font-weight:bold;color:#111}
.card{margin-top:16px;border-radius:14px;background:#fff;box-shadow:0 3px 5px rgba(0,0,0,.28),0 0 3px rgba(0,0,0,.15);padding:10px 16px 30px}
.n{margin-left:-5px}
.bar{display:flex;height:29px;margin:8px -1px 19px -7px;align-items:stretch}
.pill{background:#e2e2e2;border-radius:15px;font-size:13px}
.by{margin-left:auto;padding:6px 5px 0 0}
.sel{width:132px;border:1px solid #888;border-radius:15px;display:flex;overflow:hidden;font-size:13px}
select{appearance:none;flex:1;padding-left:8px}.ar{width:26px;background:#e2e2e2;border-left:1px solid #888;display:grid;place-items:center}
.q{margin:0 5px 0 14px;width:201px;border:1px solid #aaa;border-radius:15px;display:flex;align-items:center;gap:3px;padding-left:5px;font-size:13px}
.q input{flex:1}.q input::placeholder{color:#bbb;opacity:1}
table{width:100%;table-layout:fixed;border-collapse:collapse}
th{background:#74a6fa;height:28px;padding:0 0 0 17px;font-weight:normal;text-align:left;white-space:nowrap;color:#333}
th span{display:inline-block;width:0;height:0;border:4px solid transparent;border-top:8px solid #222;border-bottom:0;margin-right:6px}
td{height:29px;padding:0;color:#666}td:nth-child(1){padding-left:27px}td:nth-child(2){padding-left:62px}td:nth-child(5){padding-left:8px}td:nth-child(6){padding-left:18px}
tr:nth-child(even) td{background:#d3e2fc}
td button{display:block;height:24px;width:62px;background:#f5f5f5;border-radius:5px;box-shadow:0 2px 4px rgba(0,0,0,.35);font-size:12px;font-weight:bold}td:nth-child(6) button{width:52px}
.pg{display:flex;justify-content:flex-end;height:27px;margin:24px -1px 0 0;font-size:12px;color:#aaa}.pg button{width:58px;background:#ebebeb;border:1px solid #d5d5d5}.pg .on{width:49px;background:#fff;color:#777}`,
`<div class="t"><span>Category's ID: FAS</span><span>Total items: 90</span></div>
<div class="card"><div class="n">SubCategories:</div>
<div class="bar"><button class="pill" style="width:161px;font-size:12px">Add New SubCategory</button><label class="by" for="by">By:</label>
<div class="sel"><select id="by"><option>None</option></select><div class="ar">${icon('caret')}</div></div>
<label class="q">${icon('pmag')}<input placeholder="Search..." aria-label="Search"></label><button class="pill" style="width:85px;font-size:12px">Search</button></div>
<table><colgroup><col style="width:91px"><col style="width:216px"><col><col style="width:139px"><col style="width:83px"><col style="width:83px"></colgroup>
<thead><tr>${['ID','SubCategory ID','SubCategory Name','Total Items','Edit','View'].map(h=>`<th><span></span>${h}</th>`).join('')}</tr></thead>
<tbody>${['TST','JNS','SHS'].map((c,i)=>`<tr><td>${i+1}</td><td>${c}</td><td></td><td></td><td><button>Edit</button></td><td><button>View</button></td></tr>`).join('')}</tbody></table>
<div class="pg"><button>Prev</button><button class="on">1</button><button>Next</button></div></div>`);

define('shop-page', `:host{display:flex;flex-direction:column;background:#fff;min-height:0}
header{height:59px;flex:none;position:relative;z-index:1;background:#fff;box-shadow:0 3px 5px rgba(0,0,0,.35);display:flex;padding:0 23px 0 39px}
.logo{font:24px/59px Roboto,"Liberation Sans",sans-serif;color:#95c11f;width:159px;white-space:nowrap}.logo b{color:#009639;font-weight:500}
.ms{font:italic bold 14px/18px "Liberation Sans",sans-serif;color:#0845a6;margin-top:26px}
.bell{margin:15px 0 0 auto;position:relative}.bell .n{position:absolute;left:19px;top:2px}
.who{display:flex;gap:9px;margin:12px 0 0 19px;color:#222}
.who div{padding-top:4px;font-size:14px;line-height:16px;width:110px;white-space:nowrap}.who i{display:block;font-size:12px;padding-left:2px}
.b{flex:1;display:flex;min-height:0}
nav{width:194px;background:#0845a6;flex:none;position:relative;z-index:2}
nav a{display:block;height:40px;line-height:38px;padding-left:5px;background:#a9c6fd;color:#1f4012;font-size:14px;font-weight:bold;white-space:nowrap}nav a.on{background:#0845a6;color:#fff}
main{flex:1;position:relative}
shop-dialog{position:absolute;left:198px;top:165px}`,
`<header><div class="logo">ONLINE <b>SHOP</b></div><div class="ms">Management System</div>
<div class="bell">${icon('bell')}<div class="n">${icon('alert')}</div></div><div class="who">${icon('admin')}<div>Nguyen Gia Huy<i>Administrator</i></div></div></header>
<div class="b"><nav>${['Account Management','Website Configuration','Banners &amp; Ads','Transaction Management','Media Management','Promotion Management','Summary Report','Sales Report','Product Management'].map((n,i)=>`<a href="#"${i==1?' class="on"':''}>${n}</a>`).join('')}</nav>
<main><shop-listing></shop-listing><shop-dialog></shop-dialog></main></div>`);

define('mock-browser', `:host{display:flex;flex-direction:column;border:1px solid #222;border-left:0;border-radius:5px 5px 0 0;height:100%}
.top{background:#e5e5e5;height:60px;flex:none;border-left:1px solid #222;border-bottom:1px solid #222;border-radius:4px 4px 0 0;color:#222;text-align:center;padding-top:5px}
.row{display:flex;align-items:center;padding:5px 7px 0 7px;gap:6px}
input{flex:1;height:27px;border:1px solid #222;background:#fff;color:#0b72e0;padding-left:6px;font-size:12px;margin-left:-2px}
slot{display:contents}::slotted(*){flex:1}`,
`<div class="top">Moqzilla<div class="row">${icon('back')}${icon('fwd')}${icon('reload')}<input aria-label="Address" value="http://onlineshopping.com/website-configuration"></div></div><slot></slot>`);

/* ---------- canvas ---------- */
define('work-canvas', `:host{display:grid;flex:1;min-width:0;grid-template-columns:19px 1fr 17px;grid-template-rows:19px 1fr 17px;background:#eee}
.k{background:#fff;border-right:1px solid #ccc;border-bottom:1px solid #ccc}
.x{grid-column:2/4}.y{grid-row:2/4}.art{padding:34px 95px 24px 72px;min-height:0;min-width:0}.z{background:#dcdcdc}`,
`<div class="k"></div><canvas-ruler class="x" axis="x" from="-300" to="900"></canvas-ruler>
<canvas-ruler class="y" axis="y" from="0" to="800"></canvas-ruler>
<div class="art"><mock-browser><shop-page></shop-page></mock-browser></div>
<scroll-bar ends="dl" style="--before:370;--thumb:458;--after:1"></scroll-bar>
<scroll-bar horizontal style="--before:405;--thumb:775;--after:33"></scroll-bar><div class="z"></div>`);

/* ---------- format panel ---------- */
define('panel-section', `:host{display:block}
h2{margin:0;font-size:10px;font-weight:normal;color:#444;background:#fff;height:25px;line-height:24px;border:solid #ddd;border-width:1px 0;padding-left:10px}
:host([first]) h2{border-top:0;height:23px;line-height:22px}
.b{padding:13px 13px 12px;display:flex;flex-direction:column;gap:7px}`,
 el => `<h2>${el.getAttribute('heading')}</h2><div class="b"><slot></slot></div>`);
define('combo-field', `:host{display:flex;height:25px;border:1px solid #b5b5b5;border-radius:2px;background:#fff;color:#999;font-size:var(--fs,13px)}
.i{display:flex;align-items:center;padding-left:4px}
select{appearance:none;flex:1;width:0;padding-left:5px}.i+select{padding-left:4px}
.c{width:21px;border-left:1px solid #b5b5b5;display:grid;place-items:center;flex:none}`,
 el => `${el.hasAttribute('icon')?`<span class="i">${icon(el.getAttribute('icon'))}</span>`:''}<select aria-label="${el.getAttribute('value')}"><option>${el.getAttribute('value')}</option></select><span class="c">${icon('caret')}</span>`);
define('unit-field', `:host{display:flex;height:25px;border:1px solid #b5b5b5;border-radius:2px;background:#fff;color:#bbb}
label{display:flex;flex:1;align-items:center;padding:0 6px 0 4px;font-size:9px;font-weight:bold;min-width:0}
:host([plain]) label{padding:0 8px 0 3px}
input{flex:1;width:0}
.c{width:21px;border-left:1px solid #b5b5b5;display:grid;place-items:center;flex:none}`,
 el => `<label>${icon(el.getAttribute('icon'), el.getAttribute('turn') || '')}<input aria-label="Value">${el.getAttribute('unit')}</label>${el.hasAttribute('plain')?'':`<span class="c">${icon('caret')}</span>`}`);
define('swatch-field', `:host{display:flex;height:25px;border:1px solid #b5b5b5;background:#fff;padding:1px;gap:1px;color:#888;border-radius:1px}
.i{width:21px;display:grid;place-items:center}
button{flex:1;border:1px solid #ccc;font-size:11px;font-weight:bold;line-height:11px}`,
 el => `<span class="i">${icon(el.getAttribute('icon'))}</span>` + '<button aria-label="Pick color">?</button>'.repeat(+el.getAttribute('count') || 1));
define('button-strip', `:host{display:flex;height:22px;margin-right:3px;border:1px solid #ccc;border-radius:2px}
:host(:last-child){height:23px}
button{flex:1;display:grid;place-items:center}button+button{border-left:1px solid #ccc}`,
 el => el.getAttribute('icons').split(' ').map(n => `<button aria-label="${n}">${icon(n)}</button>`).join(''));

define('format-panel', `:host{display:flex;flex-direction:column;width:260px;background:#f4f4f4;border-left:1px solid #ccc;flex:none}
.al{height:30px;flex:none;display:flex;justify-content:space-between;padding:2px 10px 0 9px;border-bottom:1px solid #ddd}
.al button{display:grid;place-items:center}
.m{flex:1;display:flex;min-height:0}.c{flex:1;overflow:hidden;min-width:0}
.r{display:flex;gap:7px}.f{flex:1}
.info{background:#fff;padding:12px 13px 13px;height:111px;color:#666;white-space:nowrap}.info p{margin:0 0 6px}.info a{color:#0a70e0}
.cor{display:grid;grid-template-columns:93px 1fr 93px;gap:8px 0;align-items:center}.cor .k{grid-column:2;grid-row:1/3;display:grid;place-items:center}
.tg{display:flex;justify-content:center;margin:5px 0 9px;font-size:9px}.tg button{height:18px;border:1px solid #006fe8;color:#006fe8;padding:0 5px;width:89px;background:#fff;white-space:nowrap}.tg .on{width:81px;background:#006fe8;color:#fff;font-weight:bold;border-radius:0 2px 2px 0;padding:0 4px}
.card{background:#fff;border:1px solid #e6e6e6;border-radius:4px;margin:0 5px;padding:11px 13px;height:70px;color:#666;white-space:nowrap}`,
`<div class="al">${['alL','alC','alR','alT','alM','alB','diH','diV'].map(n=>`<button aria-label="${n}">${icon(n)}</button>`).join('')}</div>
<div class="m"><div class="c">
<panel-section heading="DEFAULT STYLES" first><div class="info"><p><b>You’re in Default Styles mode.</b><br>Any style you pick now will be<br>applied to all new objects you add to<br>the page.</p><a href="#">Clear default styles</a></div></panel-section>
<panel-section heading="TEXT">
<div class="r"><combo-field class="f" value="Font family"></combo-field><combo-field value="None" style="width:74px;--fs:10px"></combo-field></div>
<div class="r"><swatch-field class="f" icon="A"></swatch-field><unit-field icon="tT" unit="PX" style="width:92px"></unit-field></div>
<button-strip icons="B I U S"></button-strip><button-strip icons="tl tc tr tj"></button-strip><button-strip icons="vt vm vb gear"></button-strip></panel-section>
<panel-section heading="FILLS &amp; STROKES"><swatch-field icon="bucket" count="2"></swatch-field><swatch-field icon="pencil"></swatch-field>
<div class="r"><unit-field class="f" icon="dots" unit="PT"></unit-field><combo-field class="f" icon="lines" value="Solid"></combo-field></div></panel-section>
<panel-section heading="ROUNDED CORNERS"><div class="cor"><unit-field plain icon="c1" unit="PX"></unit-field><div class="k">${icon('link')}</div><unit-field plain icon="c1" turn="rotate(90deg)" unit="PX" style="grid-column:3"></unit-field><unit-field plain icon="c1" turn="rotate(270deg)" unit="PX" style="grid-column:1"></unit-field><unit-field plain icon="c1" turn="rotate(180deg)" unit="PX" style="grid-column:3"></unit-field></div></panel-section>
<panel-section heading="CONNECTORS"><swatch-field icon="pencil"></swatch-field>
<div class="r"><unit-field class="f" icon="dots" unit="PT"></unit-field><combo-field class="f" icon="lines" value="Solid"></combo-field></div>
<div class="r"><combo-field class="f" value="Style"></combo-field><combo-field class="f" value="Start"></combo-field><combo-field class="f" value="End"></combo-field></div></panel-section>
<panel-section heading="REPLACE COLORS"><div class="tg"><button>ENTIRE PROJECT</button><button class="on">CURRENT PAGE</button></div>
<div class="card">Click on any color below to<br>replace it on the current page</div></panel-section>
</div><scroll-bar ends="ld" style="--thumb:727;--after:108"></scroll-bar></div>`);

define('mockup-editor', `:host{display:flex;flex-direction:column;height:100vh;background:#eee}
.w{flex:1;display:flex;min-height:0}
.e{height:1px;background:#e8e8e8;flex:none;display:flex;justify-content:center}.e i{width:400px;background:#ccc}`,
`<top-bar></top-bar><div class="w"><side-rail></side-rail><stencil-panel></stencil-panel><work-canvas></work-canvas><format-panel></format-panel></div><div class="e"><i></i></div>`);
</script>
</body>
</html>
